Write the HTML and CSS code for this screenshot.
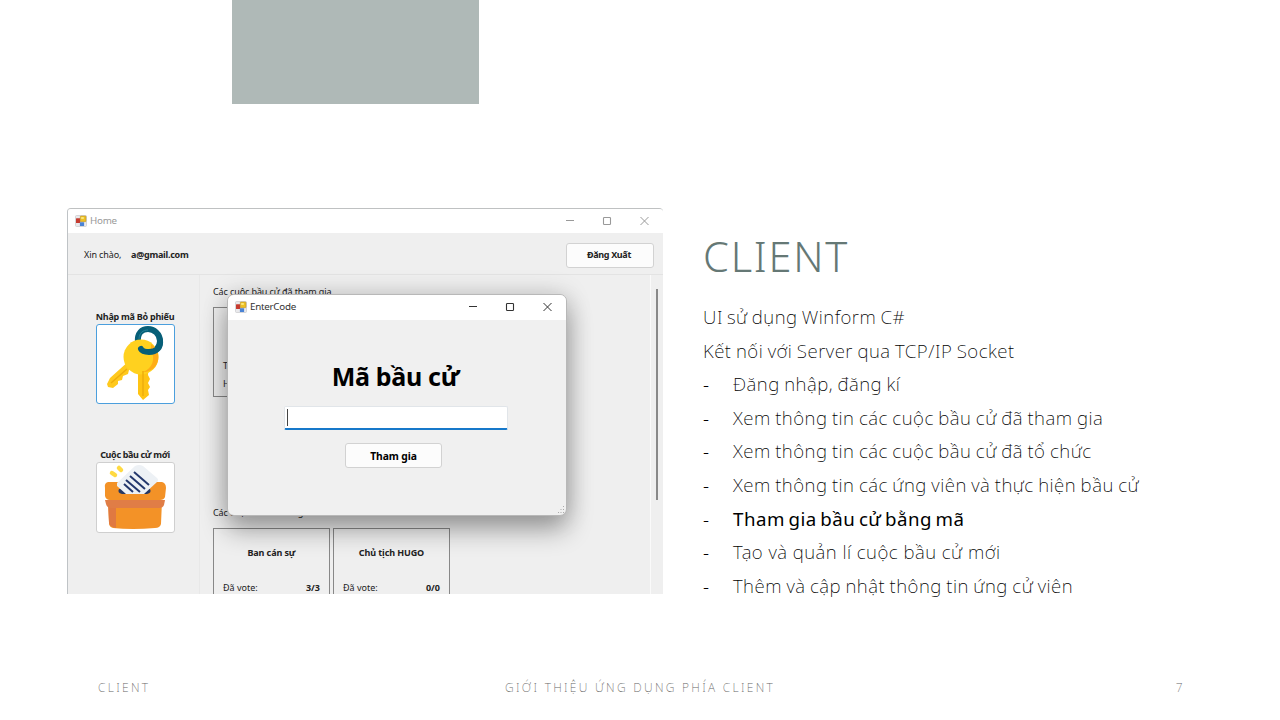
FILE: index.html
```html
<!DOCTYPE html>
<html lang="vi">
<head>
<meta charset="utf-8">
<title>Client</title>
<link rel="stylesheet" href="styles.css">
</head>
<body>
<svg width="0" height="0" class="defs">
  <symbol id="form-icon" viewBox="0 0 12 12">
    <rect x=".5" y=".5" width="11" height="11" rx="1" fill="#e9e9ec" stroke="#c9c9cc" stroke-width=".7"/>
    <rect x="1" y="3.3" width="4.3" height="4.8" rx=".5" fill="#c63b30"/>
    <rect x="5.3" y="1" width="5.7" height="5.7" rx=".6" fill="#edc025" stroke="#b58b1c" stroke-width=".5"/>
    <path d="M6.2 2h2.6v2H6.2z" fill="#fae678"/>
    <rect x="4.9" y="7.3" width="4.2" height="3.8" rx=".5" fill="#4a83d5"/>
  </symbol>
  <symbol id="win-controls" viewBox="0 0 84 10">
    <path d="M1 4.500h8M75.500 1l8 8M83.500 1l-8 8" fill="none" stroke="currentColor" stroke-width="1"/>
    <rect x="38.500" y="1.500" width="7" height="7" rx=".8" fill="none" stroke="currentColor" stroke-width="1.1"/>
  </symbol>
</svg>
<div class="slide">
  <div class="accent"></div>
  <main class="content">
    <section class="window">
      <header class="titlebar">
        <svg class="app-icon"><use href="#form-icon"/></svg>
        <span class="window-title">Home</span>
        <svg class="controls"><use href="#win-controls"/></svg>
      </header>
      <div class="userbar">
        <span class="hello">Xin chào,</span><b class="email">a@gmail.com</b>
        <div class="button logout">Đăng Xuất</div>
      </div>
      <div class="body">
        <aside class="side">
          <b class="side-label label-join">Nhập mã Bỏ phiếu</b>
          <div class="tile tile-keys">
            <svg width="77" height="77" viewBox="0 0 77 77">
              <path d="M41 17C40 8 45 4 51 4s12 5 12 12-5 11-12 10" fill="none" stroke="#075f78" stroke-width="6"/>
              <path d="M33 35 13 53l-3 6 1 3 5 1 5-4v-3l4-1 1-4 5-2 1-4 8-7z" fill="#ffc91d"/>
              <path d="M41 43v26l5 6 6-5-1-5 2-3-2-4 2-4-2-4 1-11z" fill="#ffc414"/>
              <circle cx="44" cy="32" r="17.500" fill="#ffd11f"/>
              <path d="M54 25c5 9 1 19-8 22 10 0 17-8 15-18-1-5-4-8-7-10z" fill="#ffad17"/>
              <path d="M46 46v25M30 44 14 58" stroke="#eeae0c" stroke-width="1.500" fill="none"/>
              <path d="M63 15c1 8-4 12-11 12-5 0-7-1-8-3" fill="none" stroke="#075f78" stroke-width="6" stroke-linecap="round"/>
              <path d="M42 14c0-6 4-9 9-9" fill="none" stroke="#248199" stroke-width="1"/>
            </svg>
          </div>
          <b class="side-label label-new">Cuộc bầu cử mới</b>
          <div class="tile tile-box">
            <svg width="77" height="68" viewBox="0 0 77 68">
              <path d="M11 38h54l-1 23q-1 4-6 4-23 2-42 0-4-1-4-5z" fill="#f39227"/>
              <path d="M11 38h8v27l-3-1q-4-1-4-5z" fill="#e07941"/>
              <path d="M8 37h60l-1 5q-1 3-5 3H14q-4 0-5-4z" fill="#e07d46"/>
              <path d="M11 19h54q4 1 4 6l-1 9q-1 3-5 3H13q-4 0-5-4V25q-1-5 3-6z" fill="#f39227"/>
              <path d="M22 26h31q2 4-3 5H25q-5-1-3-5z" fill="#263863"/>
              <path d="M20 20 38 3q4-2 8 0l14 12q2 2 0 4L47 31H29l-9-8z" fill="#edf1f5"/>
              <path d="m37 9 15 13m-19-9 15 13m-19-9 14 12m-16-8 9 8" stroke="#24386d" stroke-width="2"/>
              <path d="m15 10 3 2m4-7 2 2" stroke="#ffda42" stroke-width="4.500" stroke-linecap="round"/>
            </svg>
          </div>
        </aside>
        <div class="main">
          <div class="list-label">Các cuộc bầu cử đã tham gia</div>
          <div class="cards cards-joined"><div class="card joined"><span>Trạng</span><span>Hạn</span></div></div>
          <div class="list-label">Các cuộc bầu cử đang tổ chức</div>
          <div class="cards">
            <div class="card"><b class="card-title">Ban cán sự</b><div class="votes"><span>Đã vote:</span><b>3/3</b></div></div>
            <div class="card"><b class="card-title">Chủ tịch HUGO</b><div class="votes"><span>Đã vote:</span><b>0/0</b></div></div>
          </div>
        </div>
        <div class="scroll"><div class="thumb"></div></div>
      </div>
      <div class="dialog">
        <header class="titlebar dialog-bar">
          <svg class="app-icon"><use href="#form-icon"/></svg>
          <span class="window-title">EnterCode</span>
          <svg class="controls"><use href="#win-controls"/></svg>
        </header>
        <h2 class="dialog-title">Mã bầu cử</h2>
        <div class="field"><i class="caret"></i></div>
        <div class="button join">Tham gia</div>
        <svg class="grip" viewBox="0 0 7 7"><path d="M5 0h1v1H5zM5 3h1v1H5zM5 6h1v1H5zM2.500 3h1v1h-1zM2.500 6h1v1h-1zM0 6h1v1H0z" fill="#aaa"/></svg>
      </div>
    </section>
    <section class="text">
      <h1 class="heading">CLIENT</h1>
      <p class="line intro">UI sử dụng Winform C#</p>
      <p class="line">Kết nối với Server qua TCP/IP Socket</p>
      <ul class="points">
        <li class="line">Đăng nhập, đăng kí</li>
        <li class="line">Xem thông tin các cuộc bầu cử đã tham gia</li>
        <li class="line">Xem thông tin các cuộc bầu cử đã tổ chức</li>
        <li class="line">Xem thông tin các ứng viên và thực hiện bầu cử</li>
        <li class="line current">Tham gia bầu cử bằng mã</li>
        <li class="line manage">Tạo và quản lí cuộc bầu cử mới</li>
        <li class="line">Thêm và cập nhật thông tin ứng cử viên</li>
      </ul>
    </section>
  </main>
  <footer class="footer"><span>CLIENT</span><span class="foot-mid">GIỚI THIỆU ỨNG DỤNG PHÍA CLIENT</span><span class="page">7</span></footer>
</div>
</body>
</html>
```
FILE: styles.css
```css
* { box-sizing: border-box; }
body { margin: 0; background: #fff; font-family: "Noto Sans", sans-serif; }
.defs { display: block; }
.slide { width: 1280px; height: 720px; overflow: hidden; display: flex; flex-direction: column; }
.accent { width: 247px; height: 104px; margin-left: 232px; background: #afb9b7; flex: none; }
.content { display: flex; gap: 40px; margin: 104px 0 0 67px; height: 386px; flex: none; }
.window { position: relative; width: 596px; height: 386px; overflow: hidden; background: #efefef; border-top: 1px solid #bfc1c2; border-left: 1px solid #bfc3c6; border-radius: 4px 4px 0 0; font-size: 9px; line-height: 12px; color: #222; display: flex; flex-direction: column; }
.titlebar { display: flex; align-items: center; height: 24px; flex: none; background: #fff; padding: 0 14px 1px 7px; color: #999; }
.app-icon { width: 12px; height: 12px; }
.window-title { margin-left: 3px; font-size: 9.800px; letter-spacing: -.25px; }
.controls { width: 84px; height: 10px; margin-left: auto; }
.userbar { display: flex; align-items: center; height: 42px; flex: none; padding: 2px 9px 0 16px; border-bottom: 1px solid #e3e3e3; }
.hello { width: 47px; letter-spacing: -.1px; }
.email { letter-spacing: -.25px; }
.button { display: flex; align-items: center; justify-content: center; height: 25px; border: 1px solid #d2d2d2; border-radius: 3px; background: #fcfcfc; font-weight: 700; }
.logout { width: 88px; margin-left: auto; margin-top: 1px; padding-right: 2px; letter-spacing: -.35px; }
.body { flex: 1; min-height: 0; display: flex; }
.side { width: 132px; border-right: 1px solid #e8e8e8; padding: 36px 0 0 28px; display: flex; flex-direction: column; }
.side-label { width: 78px; height: 13px; flex: none; white-space: nowrap; display: flex; justify-content: center; letter-spacing: -.25px; }
.label-new { margin-top: 45px; letter-spacing: -.35px; }
.tile { width: 79px; flex: none; background: #fff; border: 1px solid #cfcfcf; border-radius: 3px; overflow: hidden; }
.tile svg { display: block; }
.tile-keys { height: 80px; border-color: #4b9fdd; }
.tile-box { height: 71px; }
.main { width: 450px; padding: 11px 0 0 13px; overflow: hidden; }
.list-label { height: 21px; letter-spacing: -.1px; }
.cards { display: flex; gap: 3px; }
.cards-joined { height: 200px; }
.card { width: 117px; height: 90px; border: 1px solid #888; padding: 18px 9px 0; display: flex; flex-direction: column; }
.card-title { text-align: center; letter-spacing: -.1px; }
.votes { display: flex; justify-content: space-between; margin-top: 23px; }
.joined { padding-top: 52px; gap: 6px; }
.scroll { flex: 1; border-left: 1px solid #fafafa; padding: 14px 0 0 5px; }
.thumb { width: 2px; height: 211px; background: #898989; }
.dialog { position: absolute; left: 159px; top: 85px; width: 340px; height: 222px; border: 1px solid #b8b8b8; border-radius: 7px; background: #f0f0f0; box-shadow: 0 14px 26px rgba(0,0,0,.32), 0 0 26px rgba(0,0,0,.16); display: flex; flex-direction: column; align-items: center; }
.dialog-bar { width: 100%; height: 25px; border-radius: 6px 6px 0 0; color: #333; }
.dialog-title { margin: 40px 0 0; height: 32px; font-size: 25px; line-height: 32px; font-weight: 700; color: #000; letter-spacing: -.3px; padding-right: 3px; }
.field { width: 224px; height: 24px; margin-top: 14px; border: 1px solid #e1e5e9; border-bottom: 2px solid #1678ca; border-radius: 2px; background: #fff; padding: 2px 0 0 2px; margin-right: 3px; }
.caret { display: block; width: 1px; height: 17px; background: #444; }
.join { width: 97px; margin: 13px 7px 0 0; font-size: 10.300px; letter-spacing: -.1px; color: #000; }
.grip { position: absolute; right: 1px; bottom: 2px; width: 7px; height: 7px; }
.text { width: 500px; padding-top: 17px; }
.heading { margin: 0; height: 75px; font-size: 41.500px; line-height: 62px; font-weight: 300; color: #657875; letter-spacing: 1.800px; }
.line { margin: 0; height: 33.600px; line-height: 33.600px; font-size: 18.700px; font-weight: 200; color: #000; white-space: nowrap; letter-spacing: .5px; word-spacing: -.9px; }
.intro { word-spacing: -1.250px; }
.points { margin: 0; padding: 0; list-style: none; }
.points .line { display: flex; }
.points .line::before { content: "-"; width: 30px; font-weight: 300; }
.points .current { font-weight: 400; word-spacing: -1.800px; }
.points .manage { word-spacing: -.15px; }
.footer { margin-top: 84px; display: grid; grid-template-columns: 407px 1fr auto; padding: 0 95px 0 98px; font-size: 12px; line-height: 20px; font-weight: 200; color: #666; letter-spacing: 2.300px; }
```
